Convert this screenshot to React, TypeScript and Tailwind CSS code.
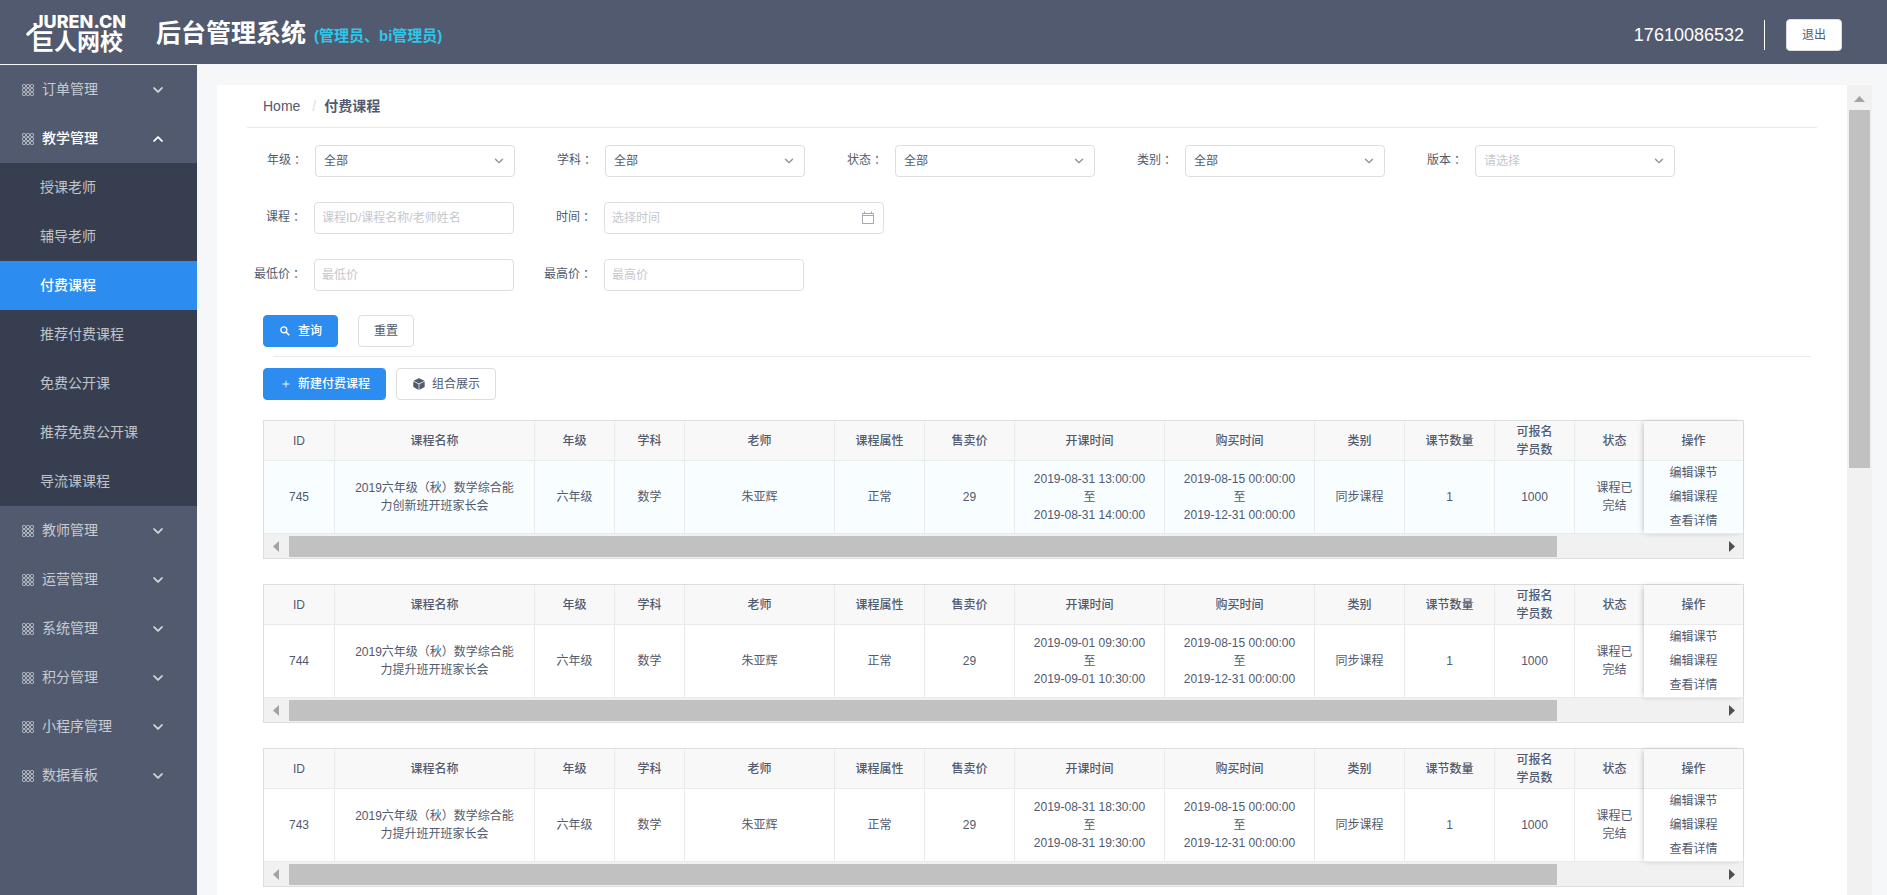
import React from "react";
import { IoIosAdd, IoIosArrowDown, IoIosArrowUp, IoIosCube } from "react-icons/io";

const MENU_TOP = ["订单管理"];
const MENU_BOTTOM = ["教师管理", "运营管理", "系统管理", "积分管理", "小程序管理", "数据看板"];
const SUBMENU = ["授课老师", "辅导老师", "付费课程", "推荐付费课程", "免费公开课", "推荐免费公开课", "导流课课程"];

const COLUMNS: { title: string; width: string }[] = [
  { title: "ID", width: "w-[71px]" },
  { title: "课程名称", width: "w-[200px]" },
  { title: "年级", width: "w-[80px]" },
  { title: "学科", width: "w-[70px]" },
  { title: "老师", width: "w-[150px]" },
  { title: "课程属性", width: "w-[90px]" },
  { title: "售卖价", width: "w-[90px]" },
  { title: "开课时间", width: "w-[150px]" },
  { title: "购买时间", width: "w-[150px]" },
  { title: "类别", width: "w-[90px]" },
  { title: "课节数量", width: "w-[90px]" },
  { title: "可报名学员数", width: "w-[80px]" },
  { title: "状态", width: "w-[80px]" },
];

interface Course {
  id: number;
  name: string;
  start: string;
  end: string;
}

const COURSES: Course[] = [
  { id: 745, name: "2019六年级（秋）数学综合能力创新班开班家长会", start: "2019-08-31 13:00:00", end: "2019-08-31 14:00:00" },
  { id: 744, name: "2019六年级（秋）数学综合能力提升班开班家长会", start: "2019-09-01 09:30:00", end: "2019-09-01 10:30:00" },
  { id: 743, name: "2019六年级（秋）数学综合能力提升班开班家长会", start: "2019-08-31 18:30:00", end: "2019-08-31 19:30:00" },
];

function Logo() {
  return (
    <svg width="104" height="48" viewBox="0 0 104 48" fill="#fff" aria-label="巨人网校">
      <text x="9" y="20" fontFamily="Inter, sans-serif" fontWeight="800" fontSize="18">JUREN.CN</text>
      <path d="M4 26L12.5 18.5" stroke="#fff" strokeWidth="3.5" strokeLinecap="round" />
      <text x="7" y="42" fontFamily="'Liberation Sans', 'Noto Sans CJK SC', sans-serif" fontWeight="700" fontSize="23">巨人网校</text>
    </svg>
  );
}

function KeypadIcon() {
  return (
    <svg width="12" height="12" viewBox="0 0 12 12" fill="none" stroke="currentColor" strokeWidth="1">
      {[2, 6, 10].map((y) => [2, 6, 10].map((x) => <rect key={`${x}-${y}`} x={x - 1.5} y={y - 1.5} width="3" height="3" rx="1" />))}
    </svg>
  );
}

function SearchIcon() {
  return (
    <svg width="10" height="10" viewBox="0 0 10 10" fill="none" stroke="currentColor" className="mr-2 ml-px">
      <circle cx="3.8" cy="3.8" r="3" strokeWidth="1.3" />
      <path d="M6 6l3.3 3.3" strokeWidth="1.6" />
    </svg>
  );
}

function CalendarIcon() {
  return (
    <svg width="14" height="14" viewBox="0 0 14 14" fill="none" stroke="currentColor" strokeWidth="1">
      <path d="M1.5 2.5h11v10h-11zM1.5 4.5h11M3.5 0.5v2M10.5 0.5v2" />
    </svg>
  );
}

function MenuItem({ label, open = false }: { label: string; open?: boolean }) {
  const Arrow = open ? IoIosArrowUp : IoIosArrowDown;
  return (
    <button
      type="button"
      aria-expanded={open}
      className={`flex h-[49px] w-full items-center pr-8 pl-[22px] text-sm ${open ? "font-medium text-white" : "text-white/70"}`}
    >
      <span className="text-white/60"><KeypadIcon /></span>
      <span className="ml-2 flex-1 pb-[2px] text-left">{label}</span>
      <Arrow size={14} stroke="currentColor" strokeWidth={20} />
    </button>
  );
}

function Sidebar() {
  return (
    <nav className="mt-px w-[197px] shrink-0 bg-[#515a6e]">
      {MENU_TOP.map((m) => <MenuItem key={m} label={m} />)}
      <MenuItem label="教学管理" open />
      <div className="bg-[#363e4f]">
        {SUBMENU.map((s) => (
          <a
            key={s}
            href="#"
            className={`flex h-[49px] items-center pb-[2px] pl-10 text-sm ${s === "付费课程" ? "bg-[#2d8cf0] font-medium text-white" : "text-white/70"}`}
          >
            {s}
          </a>
        ))}
      </div>
      {MENU_BOTTOM.map((m) => <MenuItem key={m} label={m} />)}
    </nav>
  );
}

const FIELD = "h-8 w-full rounded border border-[#dcdee2] bg-white outline-none placeholder:text-[#c5c8ce]";

function Field({ id, label, children }: { id: string; label: string; children: React.ReactNode }) {
  return (
    <div className="flex">
      <label htmlFor={id} className="flex h-[30px] w-[60px] shrink-0 items-center justify-end pr-3 whitespace-nowrap">
        {label}<span className="font-['Noto_Sans_CJK_TC',sans-serif]">：</span>
      </label>
      {children}
    </div>
  );
}

function SelectField({ id, label, value, muted = false }: { id: string; label: string; value: string; muted?: boolean }) {
  return (
    <Field id={id} label={label}>
      <div className="relative w-[200px]">
        <select id={id} className={`${FIELD} appearance-none px-2 ${muted ? "text-[#c5c8ce]" : ""}`}>
          <option>{value}</option>
        </select>
        <IoIosArrowDown size={12} className="pointer-events-none absolute top-[10px] right-[10px] text-[#808695]" stroke="currentColor" strokeWidth={12} />
      </div>
    </Field>
  );
}

function InputField({ id, label, hint }: { id: string; label: string; hint: string }) {
  return (
    <Field id={id} label={label}>
      <div className="w-[200px]">
        <input id={id} type="text" placeholder={hint} className={`${FIELD} px-[7px]`} />
      </div>
    </Field>
  );
}

function Filters() {
  return (
    <form className="ml-[7px] flex flex-col gap-[25px] pt-[17px]">
      <div className="ml-px flex flex-wrap gap-x-[30px] gap-y-[25px]">
        <SelectField id="grade" label="年级" value="全部" />
        <SelectField id="subject" label="学科" value="全部" />
        <SelectField id="status" label="状态" value="全部" />
        <SelectField id="category" label="类别" value="全部" />
        <SelectField id="version" label="版本" value="请选择" muted />
      </div>
      <div className="flex gap-[30px]">
        <InputField id="course" label="课程" hint="课程ID/课程名称/老师姓名" />
        <Field id="time" label="时间">
          <div className="relative w-[280px]">
            <input id="time" type="text" placeholder="选择时间" className={`${FIELD} pr-8 pl-[7px]`} />
            <span className="pointer-events-none absolute top-[9px] right-[9px] text-[#a5a9b4]"><CalendarIcon /></span>
          </div>
        </Field>
      </div>
      <div className="flex gap-[30px]">
        <InputField id="min-price" label="最低价" hint="最低价" />
        <InputField id="max-price" label="最高价" hint="最高价" />
      </div>
    </form>
  );
}

const BTN = "flex h-8 items-center rounded border px-[15px]";
const BTN_PRIMARY = `${BTN} border-[#2d8cf0] bg-[#2d8cf0] font-medium text-white`;
const BTN_DEFAULT = `${BTN} border-[#dcdee2] bg-white`;

const CELL = "border-r border-b border-[#e8eaec] p-0 text-center";

function CourseTable({ course, highlighted }: { course: Course; highlighted: boolean }) {
  const bg = highlighted ? "bg-[#f8fdff]" : "bg-white";
  const values: React.ReactNode[] = [
    course.id,
    course.name,
    "六年级",
    "数学",
    "朱亚辉",
    "正常",
    "29",
    <>{course.start}<br />至<br />{course.end}</>,
    <>2019-08-15 00:00:00<br />至<br />2019-12-31 00:00:00</>,
    "同步课程",
    "1",
    "1000",
    "课程已完结",
  ];
  return (
    <div className="relative border border-[#dcdee2]">
      <div className="overflow-hidden">
        <table className="w-[1490px] table-fixed border-separate border-spacing-0 leading-[18px]">
          <thead>
            <tr className="h-10">
              {COLUMNS.map((c) => (
                <th key={c.title} className={`${CELL} ${c.width} bg-[#f8f8f9] font-medium`}>
                  {c.title.length > 4 ? <>可报名<br />学员数</> : c.title}
                </th>
              ))}
              <th className="sticky right-0 w-[99px] border-b border-[#e8eaec] bg-[#f8f8f9] p-0 text-center font-medium">操作</th>
            </tr>
          </thead>
          <tbody>
            <tr className="h-[73px]">
              {values.map((v, i) => (
                <td key={COLUMNS[i].title} className={`${CELL} ${bg}`}>
                  <div className={i === 7 || i === 8 ? "px-2" : i === 9 ? "px-3" : "px-[18px]"}>{v}</div>
                </td>
              ))}
              <td className={`sticky right-0 border-b border-[#e8eaec] p-0 ${bg}`}>
                <div className="flex flex-col items-center gap-[6px]">
                  {["编辑课节", "编辑课程", "查看详情"].map((a) => (
                    <a key={a} href="#" className="leading-[18px]">{a}</a>
                  ))}
                </div>
              </td>
            </tr>
          </tbody>
        </table>
      </div>
      <div className="pointer-events-none absolute top-0 right-0 h-[113px] w-[99px] shadow-[-2px_0_6px_-2px_rgba(0,0,0,0.3)]" />
      <div className="flex h-6 items-center bg-[#f1f1f1]">
        <span className="flex w-[25px] justify-center pr-px">
          <svg width="6" height="11" viewBox="0 0 6 11" fill="#a3a3a3"><path d="M6 0v11L0 5.5z" /></svg>
        </span>
        <div className="flex-1">
          <div className="h-[21px] w-[88.7%] bg-[#c1c1c1]" />
        </div>
        <span className="flex w-[25px] justify-center pl-[2px]">
          <svg width="6" height="11" viewBox="0 0 6 11" fill="#505050"><path d="M0 0v11l6-5.5z" /></svg>
        </span>
      </div>
    </div>
  );
}

export default function App() {
  return (
    <div className="flex h-screen flex-col overflow-hidden bg-[#f5f7f9] font-['Liberation_Sans','Noto_Sans_CJK_SC',sans-serif] text-xs text-[#515a6e]">
      <header className="flex h-16 shrink-0 items-center bg-[#515a6e] pr-[45px] pl-6">
        <Logo />
        <h1 className="ml-7 pt-1 text-[25px] font-bold text-white">后台管理系统</h1>
        <span className="ml-2 pt-[7px] text-[15px] font-bold text-[#2bc8ec]">(管理员、bi管理员)</span>
        <div className="ml-auto flex items-center pt-[6px]">
          <span className="text-lg font-medium text-white">17610086532</span>
          <span className="mr-[21px] ml-5 h-[30px] w-px bg-white" />
          <button type="button" className={BTN_DEFAULT}>退出</button>
        </div>
      </header>
      <div className="flex min-h-0 flex-1">
        <Sidebar />
        <div className="mt-[21px] mr-[15px] ml-5 flex min-w-0 flex-1 overflow-hidden">
          <main className="min-w-0 flex-1 bg-white px-[30px]">
            <div className="flex h-[43px] items-center border-b border-[#e8eaec] pl-4 text-sm">
              <a href="#">Home</a>
              <span className="mr-2 ml-3 text-[#dcdee2]">/</span>
              <span className="font-bold">付费课程</span>
            </div>
            <Filters />
            <div className="mt-6 ml-4 flex gap-5">
              <button type="button" className={BTN_PRIMARY}>
                <SearchIcon />查询
              </button>
              <button type="button" className={BTN_DEFAULT}>重置</button>
            </div>
            <hr className="mt-[9px] mr-[6px] ml-[26px] border-[#e8eaec]" />
            <div className="mt-[11px] ml-4 flex gap-[10px]">
              <button type="button" className={BTN_PRIMARY}>
                <IoIosAdd size={14} className="mr-[5px]" />新建付费课程
              </button>
              <button type="button" className={BTN_DEFAULT}>
                <IoIosCube size={14} className="mr-[6px]" />组合展示
              </button>
            </div>
            <div className="mt-5 mr-[73px] ml-4 flex flex-col gap-[25px]">
              {COURSES.map((c, i) => <CourseTable key={c.id} course={c} highlighted={i === 0} />)}
            </div>
          </main>
          <div className="flex w-[25px] flex-col items-center bg-[#f1f1f1]">
            <span className="flex h-[25px] items-center pt-[2px]">
              <svg width="11" height="6" viewBox="0 0 11 6" fill="#a3a3a3"><path d="M0 6h11L5.5 0z" /></svg>
            </span>
            <div className="h-[358px] w-[21px] bg-[#c1c1c1]" />
          </div>
        </div>
      </div>
    </div>
  );
}
